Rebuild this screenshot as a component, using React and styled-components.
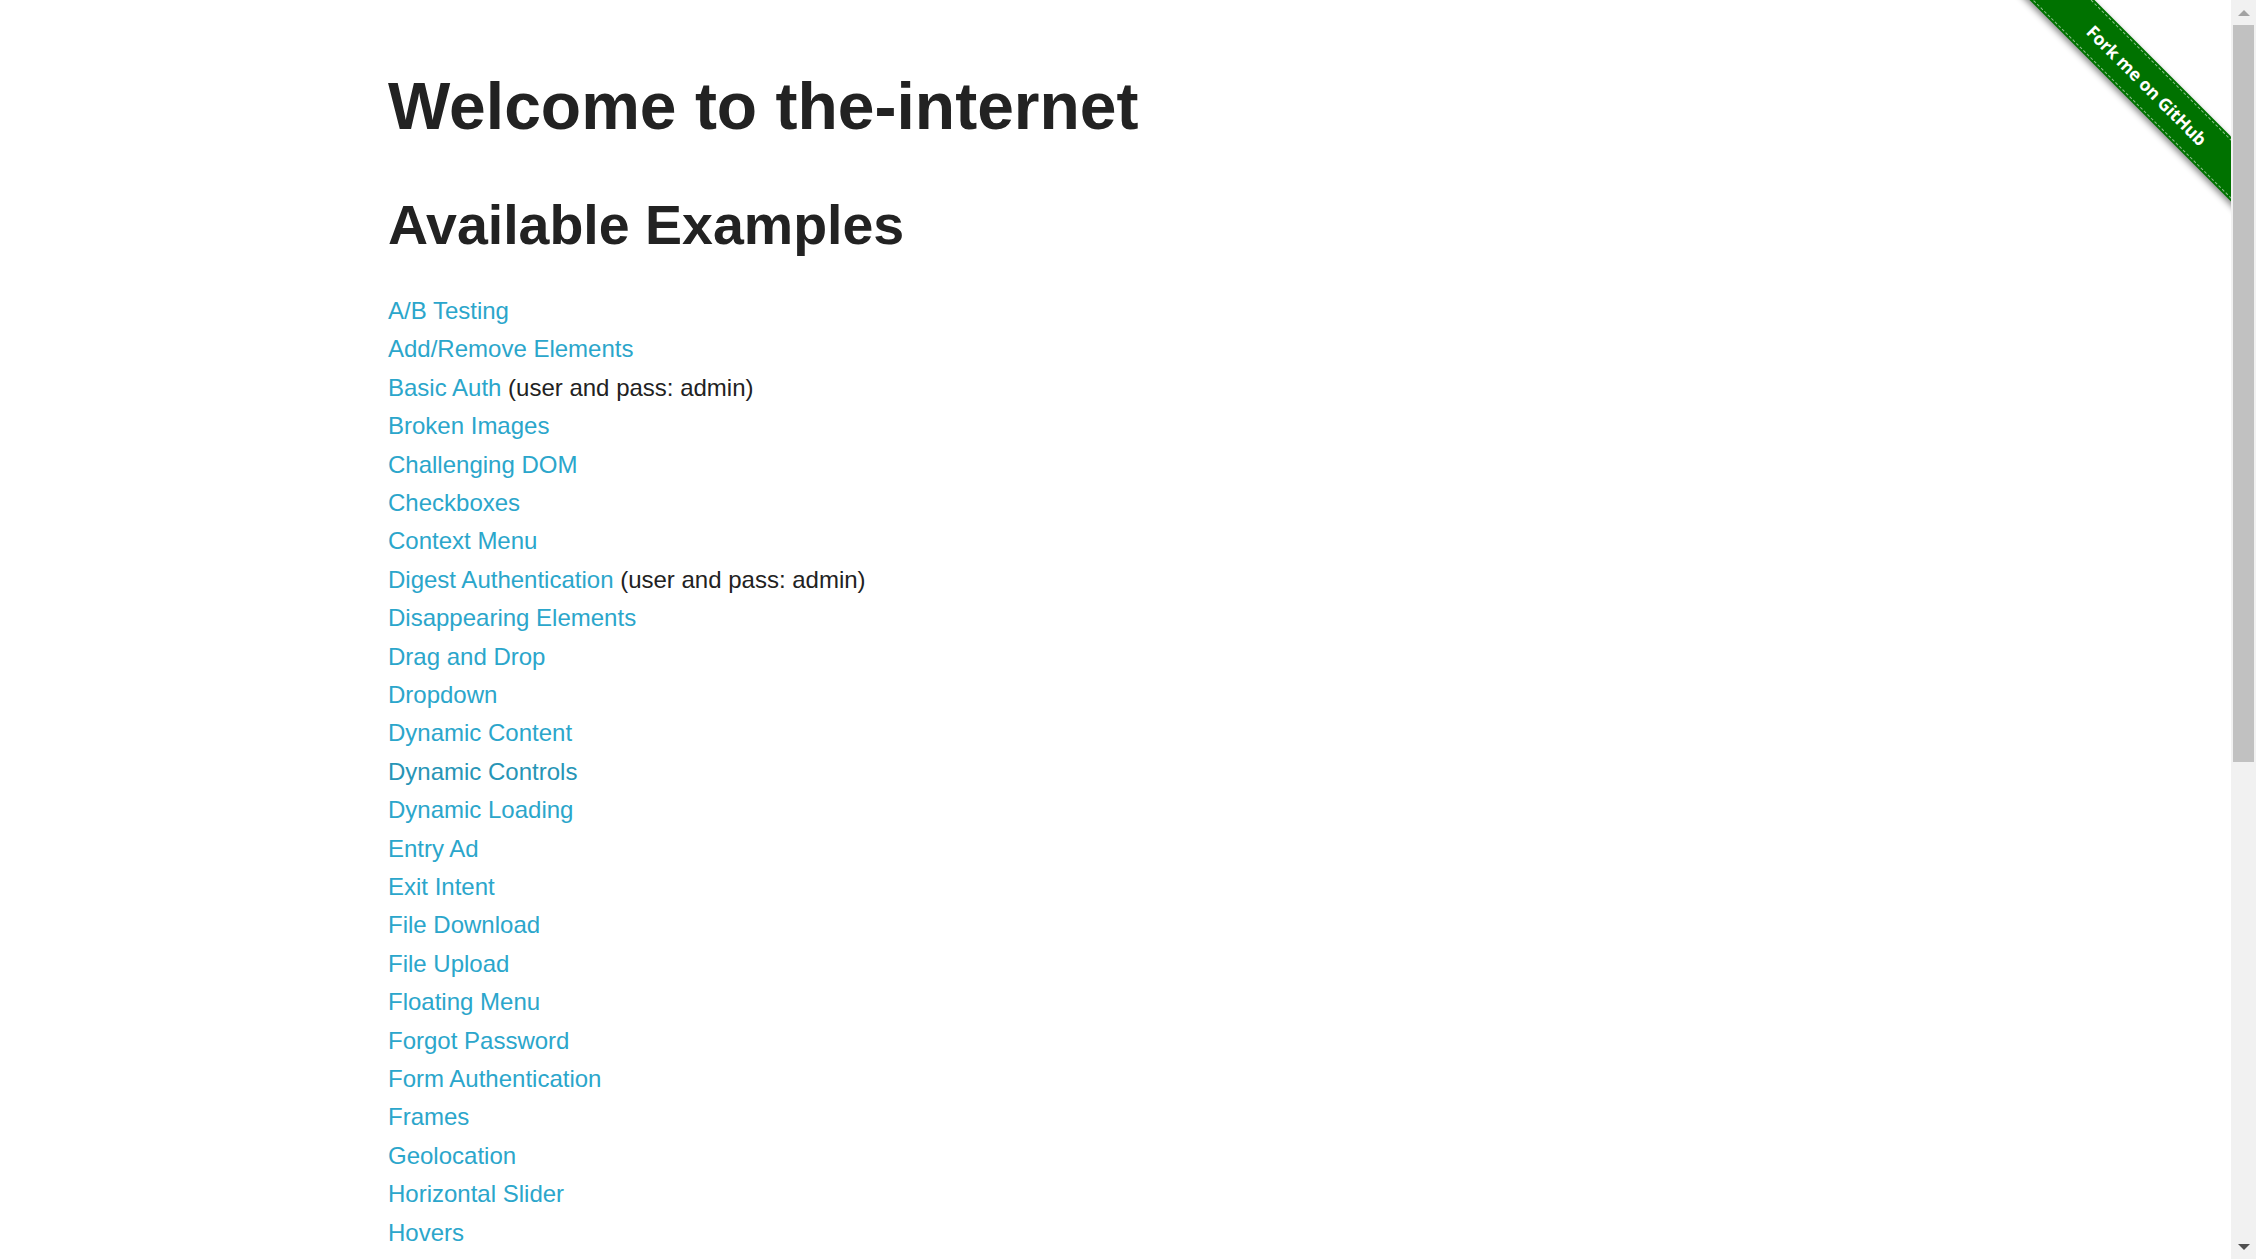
import styled, { createGlobalStyle } from "styled-components";

const GlobalStyle = createGlobalStyle`
  html, body {
    margin: 0;
    padding: 0;
    background: #fff;
  }

  body {
    font-family: "Liberation Sans", Arial, sans-serif;
    color: #222;
  }
`;

const examples = [
  { name: "A/B Testing" },
  { name: "Add/Remove Elements" },
  { name: "Basic Auth", note: "(user and pass: admin)" },
  { name: "Broken Images" },
  { name: "Challenging DOM" },
  { name: "Checkboxes" },
  { name: "Context Menu" },
  { name: "Digest Authentication", note: "(user and pass: admin)" },
  { name: "Disappearing Elements" },
  { name: "Drag and Drop" },
  { name: "Dropdown" },
  { name: "Dynamic Content" },
  { name: "Dynamic Controls", hovered: true },
  { name: "Dynamic Loading" },
  { name: "Entry Ad" },
  { name: "Exit Intent" },
  { name: "File Download" },
  { name: "File Upload" },
  { name: "Floating Menu" },
  { name: "Forgot Password" },
  { name: "Form Authentication" },
  { name: "Frames" },
  { name: "Geolocation" },
  { name: "Horizontal Slider" },
  { name: "Hovers" },
];

const App = () => {
  return (
    <>
      <GlobalStyle />
      <Page>
        <Main>
          <Row>
            <Content>
              <Title>Welcome to the-internet</Title>
              <SubTitle>Available Examples</SubTitle>
              <ExampleList>
                {examples.map((item) => (
                  <Example key={item.name}>
                    <ExampleLink href="#" $hovered={item.hovered}>
                      {item.name}
                    </ExampleLink>
                    {item.note && <> {item.note}</>}
                  </Example>
                ))}
              </ExampleList>
            </Content>
          </Row>
          <Ribbon href="#">
            <Band>
              <BandInner>Fork me on GitHub</BandInner>
            </Band>
          </Ribbon>
        </Main>
        <ScrollBar>
          <ScrollButton>
            <Arrow $dir="up" />
          </ScrollButton>
          <Track>
            <Thumb />
          </Track>
          <ScrollButton>
            <Arrow $dir="down" />
          </ScrollButton>
        </ScrollBar>
      </Page>
    </>
  );
};

export default App;

const Page = styled.div`
  display: flex;
  height: 100vh;
  overflow: hidden;
`;

const Main = styled.main`
  flex: 1;
  position: relative;
  overflow: hidden;
`;

const Row = styled.div`
  max-width: 1500px;
  margin: 0 auto;
`;

const Content = styled.div`
  padding: 65px 22.5px 0;
`;

const Title = styled.h1`
  margin: 0 0 43px;
  font-size: 66px;
  line-height: 1.25;
  font-weight: bold;
  color: #222;
`;

const SubTitle = styled.h2`
  margin: 0 0 32px;
  font-size: 55.5px;
  line-height: 1.25;
  font-weight: bold;
  color: #222;
`;

const ExampleList = styled.ul`
  margin: 0;
  padding: 0;
  list-style: none;
`;

const Example = styled.li`
  font-size: 24px;
  line-height: 38.4px;
  color: #222;
`;

const ExampleLink = styled.a`
  color: ${(p) => (p.$hovered ? "#2795b6" : "#2ba6cb")};
  text-decoration: none;
`;

const Ribbon = styled.a`
  position: absolute;
  top: 0;
  right: 0;
  width: 224px;
  height: 224px;
  overflow: hidden;
  text-decoration: none;
`;

const Band = styled.div`
  position: absolute;
  left: -20.5px;
  top: 61.5px;
  width: 320px;
  height: 46px;
  background: #007200;
  transform: rotate(45deg);
  box-shadow: 0 3px 6px rgba(0, 0, 0, 0.45);
  display: flex;
  align-items: stretch;
`;

const BandInner = styled.span`
  flex: 1;
  margin: 2px 0;
  border-top: 1px dashed rgba(255, 255, 255, 0.55);
  border-bottom: 1px dashed rgba(255, 255, 255, 0.55);
  display: flex;
  align-items: center;
  justify-content: center;
  color: #fff;
  font-family: "Open Sans", "DejaVu Sans", sans-serif;
  font-size: 17.5px;
  font-weight: 700;
  letter-spacing: -0.2px;
`;

const ScrollBar = styled.div`
  width: 25px;
  flex-shrink: 0;
  display: flex;
  flex-direction: column;
  background: #f1f1f1;
`;

const ScrollButton = styled.div`
  height: 25px;
  display: flex;
  align-items: center;
  justify-content: center;
`;

const Arrow = styled.span`
  width: 0;
  height: 0;
  border-left: 6px solid transparent;
  border-right: 6px solid transparent;
  ${(p) =>
    p.$dir === "up"
      ? "border-bottom: 6px solid #a3a3a3;"
      : "border-top: 6px solid #505050;"}
`;

const Track = styled.div`
  flex: 1;
  padding: 0 2px;
`;

const Thumb = styled.div`
  height: 737px;
  background: #c1c1c1;
`;
